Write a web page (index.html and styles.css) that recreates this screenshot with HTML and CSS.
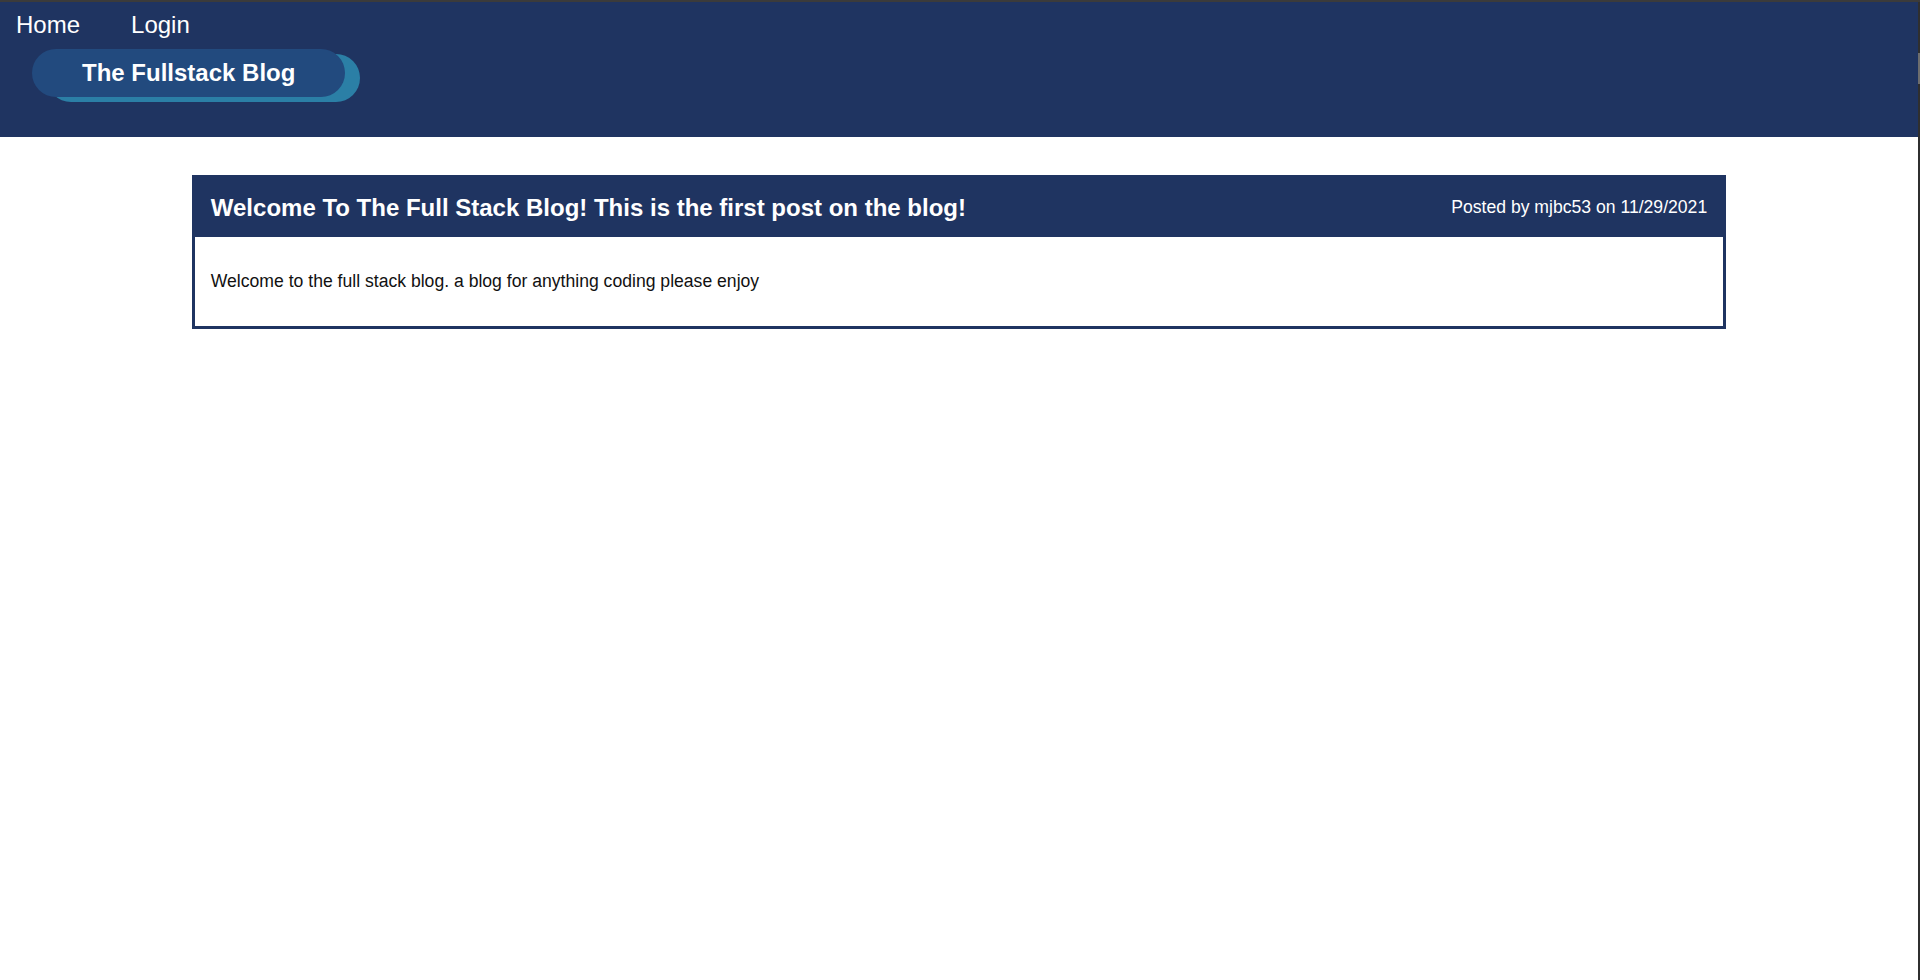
FILE: index.html
```html
<!DOCTYPE html>
<html lang="en">
<head>
<meta charset="utf-8">
<title>The Fullstack Blog</title>
<link rel="stylesheet" href="styles.css">
</head>
<body>
<div class="window">
  <div class="viewport">
    <header class="site-header">
      <nav class="nav">
        <a class="nav-link" href="#">Home</a>
        <a class="nav-link" href="#">Login</a>
      </nav>
      <div class="brand-wrap">
        <h1 class="brand">The Fullstack Blog</h1>
      </div>
    </header>
    <main class="main">
      <article class="post">
        <div class="post-head">
          <h2 class="post-title">Welcome To The Full Stack Blog! This is the first post on the blog!</h2>
          <span class="post-meta">Posted by mjbc53 on 11/29/2021</span>
        </div>
        <div class="post-body">
          <p class="post-text">Welcome to the full stack blog. a blog for anything coding please enjoy</p>
        </div>
      </article>
    </main>
  </div>
  <div class="scrollbar"><div class="thumb"></div></div>
</div>
</body>
</html>
```
FILE: styles.css
```css
html, body {
  margin: 0;
  padding: 0;
  height: 100%;
}
body {
  font-family: "Liberation Sans", Arial, sans-serif;
  background: #ffffff;
  border-top: 2px solid #3b3b3b;
  box-sizing: border-box;
}
.window {
  display: flex;
  height: 100%;
}
.viewport {
  flex: 1;
  min-width: 0;
}
.scrollbar {
  width: 2px;
  background: #2f2f2f;
  padding-top: 51px;
}
.thumb {
  height: 31px;
  background: #6d6d6d;
}
.site-header {
  background: #1f3461;
  padding: 9px 0 40px 0;
}
.nav {
  display: flex;
  gap: 51px;
  padding-left: 16px;
}
.nav-link {
  color: #ffffff;
  text-decoration: none;
  font-size: 24px;
}
.brand-wrap {
  display: flex;
  padding-left: 32px;
  margin-top: 10px;
}
.brand {
  margin: 0;
  background: #224a7e;
  color: #ffffff;
  font-size: 24px;
  font-weight: bold;
  line-height: 48px;
  height: 48px;
  padding: 0 50px;
  border-radius: 24px;
  box-shadow: 15px 5px 0 0 #2b7fa6;
}
.main {
  padding-top: 38px;
}
.post {
  box-sizing: border-box;
  width: 80%;
  margin: 0 auto;
  border: 3px solid #1f3461;
}
.post-head {
  background: #1f3461;
  color: #ffffff;
  display: flex;
  justify-content: space-between;
  align-items: center;
  height: 59px;
  padding: 0 16px;
}
.post-title {
  margin: 0;
  font-size: 24px;
  font-weight: bold;
}
.post-meta {
  font-size: 17.6px;
}
.post-body {
  padding: 34px 16px;
}
.post-text {
  margin: 0;
  font-size: 17.6px;
  color: #111111;
}
```
